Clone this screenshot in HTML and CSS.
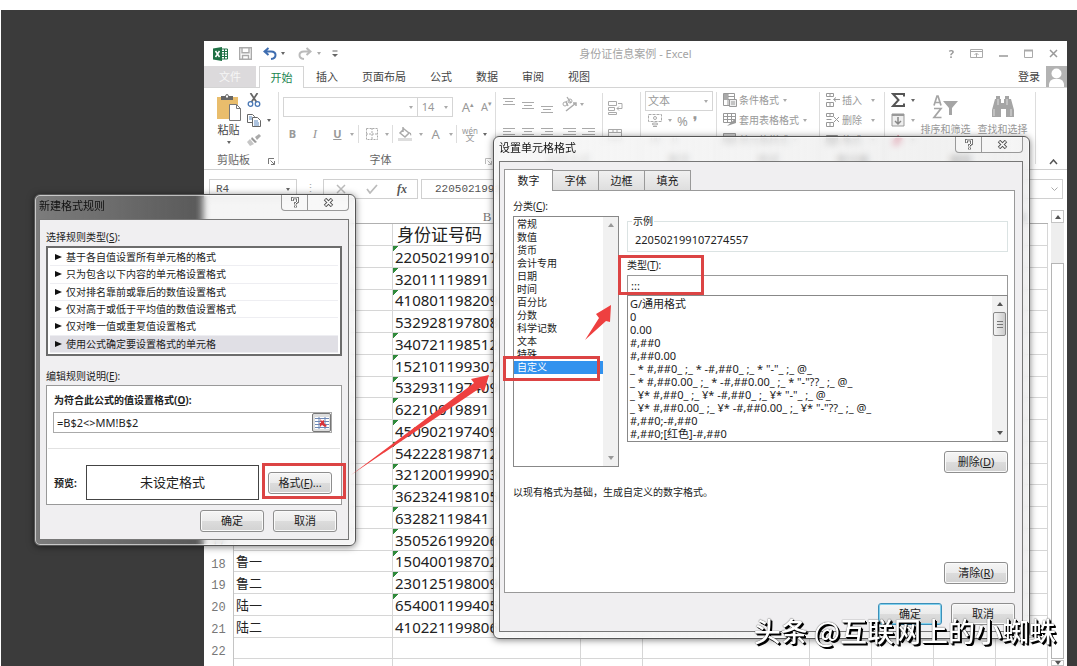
FILE: index.html
```html
<!DOCTYPE html>
<html lang="zh-CN">
<head>
<meta charset="utf-8">
<title>身份证信息案例 - Excel</title>
<link rel="stylesheet" href="styles.css">
</head>
<body>
<main class="desktop">

<section class="excel">
  <header class="titlebar">
    <div class="quick">
      <svg width="16" height="14" viewBox="0 0 16 14"><path d="M8 2h6.500v10H8z" fill="#fff" stroke="#1f7145"/><path d="M9 4.500h5M9 7h5M9 9.500h5M11.500 2v10" stroke="#1f7145"/><path d="M0 1.500 9 0v14L0 12.500z" fill="#1f7145"/><path d="m2.500 4 4 6M6.500 4l-4 6" stroke="#fff" stroke-width="1.500"/></svg>
      <svg class="save" width="13" height="13" viewBox="0 0 13 13"><path d="M.7.7h11.600v11.600H.7zM3 .7v5h7v-5M3.500 12V8.500h6V12" fill="none" stroke="#aaa" stroke-width="1.400"/></svg>
      <svg class="undo" width="14" height="13" viewBox="0 0 14 13"><path d="M5.500 1 1.500 4.500 5.500 8M2 4.500h6q4.500 0 4.500 3.500T8 12" fill="none" stroke="#3e6db0" stroke-width="2"/></svg>
      <i class="caret dark"></i>
      <svg class="redo" width="14" height="13" viewBox="0 0 14 13"><path d="m8.500 1 4 3.500-4 3.500M12 4.500H6Q1.500 4.500 1.500 8T6 12" fill="none" stroke="#bbb" stroke-width="2"/></svg>
      <i class="caret"></i>
      <svg class="more" width="6" height="8" viewBox="0 0 6 8"><path d="M.5 1h5" stroke="#666"/><path d="M0 4h6L3 7z" fill="#666"/></svg>
    </div>
    <h1>身份证信息案例 - Excel</h1>
    <div class="winctl">
      <button aria-label="帮助">?</button>
      <button aria-label="功能区显示选项"><svg width="13" height="10" viewBox="0 0 13 10"><path d="M.5.500h12v8H.5zM.5 2.500h12M6.500 8V4.500M4.500 6l2-2 2 2" fill="none" stroke="#aaa"/></svg></button>
      <button aria-label="最小化"><svg width="9" height="10"><path d="M0 7h9" stroke="#999" stroke-width="1.500"/></svg></button>
      <button aria-label="最大化"><svg width="9" height="10"><path d="M.5 1.500h8v7h-8z" fill="none" stroke="#aaa"/><path d="M0 1.500h9" stroke="#aaa" stroke-width="2"/></svg></button>
      <button aria-label="关闭"><svg width="9" height="10"><path d="m1 1 7 7M8 1 1 8" stroke="#999" stroke-width="1.500"/></svg></button>
    </div>
  </header>
  <nav class="tabs">
    <a href="#" class="file">文件</a>
    <a href="#" class="on">开始</a>
    <a href="#">插入</a><a href="#">页面布局</a><a href="#">公式</a><a href="#">数据</a><a href="#">审阅</a><a href="#">视图</a>
    <a href="#" class="login">登录</a>
    <svg class="avatar" width="21" height="21" viewBox="0 0 21 21"><path d="M0 0h21v21H0z" fill="#b3b3b3"/><circle cx="10.500" cy="7.500" r="5" fill="#fff"/><path d="M3 21v-3q1-4.500 5-5h5q4 .5 5 5v3z" fill="#fff"/></svg>
  </nav>

  <div class="ribbon">
    <section class="group g-clip">
      <div class="body">
        <button class="paste"><svg width="26" height="28" viewBox="0 0 26 28"><path d="M1 3h21v22H1z" fill="#e9bd6c"/><path d="M5 2h4q2-4 4 0h4v4H5z" fill="#666"/><path d="M10 1.500h2v2h-2z" fill="#fff"/><path d="M13.500 10.500h7l4 4v12h-11z" fill="#fff" stroke="#777"/><path d="M20.500 10.500v4h4" fill="none" stroke="#777"/></svg><span>粘贴</span><i class="caret dark"></i></button>
        <div class="stack">
          <button aria-label="剪切"><svg width="14" height="14" viewBox="0 0 14 14"><path d="m3.500 0 6 9M10.500 0l-6 9" stroke="#666" stroke-width="1.800"/><circle cx="3.500" cy="11" r="2.300" fill="none" stroke="#4a78b5" stroke-width="1.300"/><circle cx="10.500" cy="11" r="2.300" fill="none" stroke="#4a78b5" stroke-width="1.300"/></svg></button>
          <button aria-label="复制"><svg width="14" height="14" viewBox="0 0 14 14"><path d="M.5 1.500h5l2 2v6h-7z" fill="#fff" stroke="#666"/><path d="M5.500 4.500h5l3 3v6h-8z" fill="#fff" stroke="#666"/><path d="M2 4h3M2 6h3M7 8h4M7 10h5M7 12h5" stroke="#5b86bd"/></svg><i class="caret dark"></i></button>
          <button aria-label="格式刷"><svg width="14" height="14" viewBox="0 0 14 14"><path d="m8 4 4-3 2 2-4 4z" fill="#aaa"/><path d="m5 4 5 5-2 1-4-4z" fill="#999"/><path d="m3 6 4 5-4 2-3-4z" fill="#c6c6c6"/></svg></button>
        </div>
      </div>
      <footer>剪贴板<svg class="launch" width="7" height="7" viewBox="0 0 7 7"><path d="M.5 6V.500H6M2.500 2.500l4 4M6.500 3v3.500H3" fill="none" stroke="#777"/></svg></footer>
    </section>
    <section class="group g-font">
      <div class="body col">
        <div class="row">
          <button class="combo fontname" aria-label="字体"><i class="caret"></i></button><button class="combo size">14<i class="caret"></i></button>
          <button class="big">A<sup>▴</sup></button><button>A<sup>▾</sup></button>
        </div>
        <div class="row fmt">
          <button><b>B</b></button><button><em>I</em></button><button><u><b>U</b></u></button><i class="caret"></i><i class="bar"></i>
          <button aria-label="边框"><svg width="12" height="12"><path d="M.5.500h11v11H.5zM6 0v12M0 6h12" fill="none" stroke="#aaa" stroke-dasharray="2 1"/></svg></button><i class="caret"></i><i class="bar"></i>
          <button aria-label="填充颜色"><svg width="15" height="14" viewBox="0 0 15 14"><path d="m6 2 5 4-4 4-5-4zM5 0v5" fill="none" stroke="#aaa" stroke-width="1.500"/><path d="M11 5q3 1 2 4z" fill="#999"/><path d="M0 11h14v3H0z" fill="#ddd"/></svg></button><i class="caret"></i>
          <button class="big">A</button><i class="caret"></i><i class="bar"></i>
          <button class="wen"><small>wén</small>文</button><i class="caret dark"></i>
        </div>
      </div>
      <footer>字体<svg class="launch" width="7" height="7" viewBox="0 0 7 7"><path d="M.5 6V.500H6M2.500 2.500l4 4M6.500 3v3.500H3" fill="none" stroke="#bbb"/></svg></footer>
    </section>
    <section class="group g-align">
      <div class="body">
        <svg class="lines" width="130" height="56" viewBox="0 0 130 56" fill="none" stroke="#aaa">
          <path d="M7 5.500h12M9 8.500h8M7 11.500h12M26 9.500h12M28 12.500h8M26 15.500h12M45 13.500h12M47 16.500h8M45 19.500h12"/>
          <path d="M7 35.500h12M7 38.500h8M7 41.500h12M26 35.500h12M28 38.500h8M26 41.500h12M45 35.500h12M49 38.500h8M45 41.500h12M67 35.500h13M72 38.500h8M67 41.500h13M86 35.500h13M92 38.500h7M86 41.500h13"/>
          <path d="m70 18 10-8m-3 0h3v3" stroke-width="1.500"/><circle cx="69" cy="11" r="2"/><circle cx="74" cy="8" r="2"/><path d="m70 8 2 5M71 4l4 6" stroke-width="1.300"/>
          <path d="M84 10h4l-2 3z" fill="#aaa" stroke="none"/>
          <path d="M106.500 0v54" stroke="#ddd"/>
        </svg>
        <svg class="wrap" width="15" height="44" viewBox="0 0 15 44" fill="none" stroke="#aaa"><path d="M.5.500h8v4h-8zM.5 6.500h6v3h-6zM.5 11.500h8v2h-8zM10 2.500h4v5H9M11 5.500l-2 2 2 2M.5 28.500h13v11H.5zM.5 31.500h13M.5 36.500h13M5 28v3M9 28v3"/></svg>
      </div>
      <footer>对齐方式</footer>
    </section>
    <section class="group g-num">
      <div class="body col">
        <button class="combo text">文本<i class="caret"></i></button>
        <div class="row"><svg width="15" height="14" viewBox="0 0 15 14" fill="none" stroke="#aaa"><path d="M.5.500h13v7H.5z" stroke-dasharray="3 1"/><circle cx="7" cy="4" r="1.500"/><ellipse cx="7" cy="10" rx="3" ry="1"/><path d="M5 12.500h4"/></svg><i class="caret"></i><span class="pct">%</span><b>❜</b></div>
        <div class="row dec"><span>.00</span><span>.0</span></div>
      </div>
      <footer>数字</footer>
    </section>
    <section class="group g-style">
      <div class="body col">
        <button class="cmd"><svg width="14" height="14" viewBox="0 0 14 14"><path d="M.5.500h11v12H.5zM0 3.500h12M0 6.500h8M5 0v12" fill="none" stroke="#999"/><path d="M1 1h4v6H1z" fill="#aaa"/><path d="M6.500 6.500h7v7h-7z" fill="#eee" stroke="#999"/><path d="M8 9h4M8 11h4" stroke="#999"/></svg>条件格式<i class="caret"></i></button>
        <button class="cmd"><svg width="14" height="14" viewBox="0 0 14 14"><path d="M.5.500h12v9H.5zM0 3.500h12M4.500 0v10M8.500 0v10M0 6.500h12" fill="none" stroke="#999"/><path d="m4 13 9-8v5z" fill="#999"/></svg>套用表格格式<i class="caret"></i></button>
        <button class="cmd"><svg width="14" height="14" viewBox="0 0 14 14"><path d="M.5.500h12v10H.5zM0 4h12" fill="#ccc" stroke="#999"/></svg>单元格样式<i class="caret"></i></button>
      </div>
      <footer>样式</footer>
    </section>
    <section class="group g-cell">
      <div class="body col">
        <button class="cmd"><svg width="14" height="14" viewBox="0 0 14 14" fill="none" stroke="#999"><path d="M.5.500h7v3h-7zM.5 9.500h7v4h-7zM4 0v4M4 9v5M.5 6.500h4M8 6.500h6M10 4.500l-2.500 2 2.500 2"/></svg>插入<i class="caret"></i></button>
        <button class="cmd"><svg width="14" height="14" viewBox="0 0 14 14" fill="none" stroke="#999"><path d="M.5.500h7v3h-7zM.5 9.500h7v4h-7zM4 0v4M4 9v5M.5 6.500h5M8 4l5 5M13 4 8 9"/></svg>删除<i class="caret"></i></button>
        <button class="cmd"><svg width="14" height="14" viewBox="0 0 14 14"><path d="M.5 2.500h11v9H.5zM0 6h12" fill="#ccc" stroke="#999"/></svg>格式<i class="caret"></i></button>
      </div>
      <footer>单元格</footer>
    </section>
    <section class="group g-edit">
      <div class="body">
        <div class="stack">
          <button aria-label="自动求和"><svg width="14" height="14" viewBox="0 0 14 14"><path d="M13 3.500V1H2l5.500 6L2 13h11v-2.500" fill="none" stroke="#555" stroke-width="2"/></svg><i class="caret dark"></i></button>
          <button aria-label="填充"><svg width="14" height="14" viewBox="0 0 14 14"><path d="M1 1h12v12H1z" fill="#eee" stroke="#999"/><path d="M1 2h12" stroke="#999" stroke-width="2"/><path d="M7 4v7M4 8l3 3 3-3" fill="none" stroke="#888" stroke-width="1.500"/></svg><i class="caret"></i></button>
          <button aria-label="清除"><svg width="14" height="14" viewBox="0 0 14 14"><path d="m1 9 6-7 5 4-6 7H3z" fill="#e27a92"/></svg><i class="caret"></i></button>
        </div>
        <button class="tall"><svg width="28" height="24" viewBox="0 0 28 24"><path d="M2 10.500 5 1h1l3 9.500M3.500 7.500h4M2 13.500h7l-7 9h7.500" fill="none" stroke="#a5a5a5" stroke-width="1.700"/><path d="M11 6h15l-6 7v7h-3v-7z" fill="#a5a5a5"/></svg>排序和筛选</button>
        <button class="tall"><svg width="28" height="24" viewBox="0 0 28 24" fill="#a5a5a5"><path d="M7 1h4v3h1v4h3V4h1V1h4v3h2l3 11v7h-8v-8h-5v8H3v-7L6 4h1z"/><path d="M5 14v7M22 14v7M9 4v6M18 4v6" stroke="#ddd"/></svg>查找和选择</button>
      </div>
      <footer>编辑</footer>
    </section>
    <button class="collapse" aria-label="折叠功能区"><svg width="9" height="6"><path d="m1 5 3.500-4L8 5" fill="none" stroke="#555" stroke-width="1.500"/></svg></button>
  </div>

  <div class="formulabar">
    <button class="namebox">R4<i class="caret dark"></i></button>
    <span class="dots">⋮</span>
    <div class="fx">
      <svg width="10" height="10"><path d="m1 1 8 8M9 1 1 9" stroke="#bbb" stroke-width="1.500"/></svg>
      <svg width="12" height="10"><path d="m1 5 3 4 7-8" fill="none" stroke="#bbb" stroke-width="1.700"/></svg>
      <em>fx</em>
    </div>
    <label class="formula"><input type="text" value="220502199107274557" aria-label="编辑栏"><svg width="7" height="5"><path d="m.5.500 3 3 3-3" fill="none" stroke="#aaa"/></svg></label>
  </div>

  <div class="sheet">
    <table>
      <colgroup><col class="c-no"><col class="c-a"><col class="c-b"><col class="c-n"><col class="c-d"><col class="c-n"><col class="c-n"><col class="c-n"><col></colgroup>
      <thead><tr><th></th><th></th><th>B</th><th></th><th></th><th></th><th></th><th></th><th>H</th></tr></thead>
      <tbody>
      <tr><th></th><td></td><td class="kai">身份证号码</td><td></td><td></td><td></td><td></td><td></td><td></td></tr>
      <tr><th></th><td></td><td class="id">220502199107</td><td></td><td></td><td></td><td></td><td></td><td></td></tr>
      <tr><th></th><td></td><td class="id">32011119891</td><td></td><td></td><td></td><td></td><td></td><td></td></tr>
      <tr><th></th><td></td><td class="id">410801198209</td><td></td><td></td><td></td><td></td><td></td><td></td></tr>
      <tr><th></th><td></td><td class="plain">532928197808</td><td></td><td></td><td></td><td></td><td></td><td></td></tr>
      <tr><th></th><td></td><td class="id">340721198512</td><td></td><td></td><td></td><td></td><td></td><td></td></tr>
      <tr><th></th><td></td><td class="id">152101199307</td><td></td><td></td><td></td><td></td><td></td><td></td></tr>
      <tr><th></th><td></td><td class="id">532931197409</td><td></td><td></td><td></td><td></td><td></td><td></td></tr>
      <tr><th></th><td></td><td class="id">62210019891</td><td></td><td></td><td></td><td></td><td></td><td></td></tr>
      <tr><th></th><td></td><td class="id">450902197409</td><td></td><td></td><td></td><td></td><td></td><td></td></tr>
      <tr><th></th><td></td><td class="id">542228198712</td><td></td><td></td><td></td><td></td><td></td><td></td></tr>
      <tr><th></th><td></td><td class="id">321200199903</td><td></td><td></td><td></td><td></td><td></td><td></td></tr>
      <tr><th></th><td></td><td class="id">362324198105</td><td></td><td></td><td></td><td></td><td></td><td></td></tr>
      <tr><th></th><td></td><td class="id">63282119841</td><td></td><td></td><td></td><td></td><td></td><td></td></tr>
      <tr><th>17</th><td></td><td class="id">350526199206</td><td></td><td></td><td></td><td></td><td></td><td></td></tr>
      <tr><th>18</th><td>鲁一</td><td class="id">150400198702</td><td></td><td></td><td></td><td></td><td></td><td></td></tr>
      <tr><th>19</th><td>鲁二</td><td class="id">230125198009</td><td></td><td></td><td></td><td></td><td></td><td></td></tr>
      <tr><th>20</th><td>陆一</td><td class="id">654001199405</td><td></td><td></td><td></td><td></td><td></td><td></td></tr>
      <tr><th>21</th><td>陆二</td><td class="plain">410221199806</td><td></td><td></td><td></td><td></td><td></td><td></td></tr>
      <tr><th>22</th><td></td><td></td><td></td><td></td><td></td><td></td><td></td><td></td></tr>
      <tr><th></th><td></td><td></td><td></td><td></td><td></td><td></td><td></td><td></td></tr>
      </tbody>
    </table>
    <div class="vscroll">
      <button aria-label="向上滚动"><i class="up"></i></button>
      <div class="track"><div class="thumb"></div></div>
      <button aria-label="向下滚动"><i class="down"></i></button>
    </div>
  </div>
</section>

<section class="dialog rule" role="dialog" aria-labelledby="rule-title">
  <header><h2 id="rule-title">新建格式规则</h2><div class="ctl"><button aria-label="帮助"><svg width="8" height="11" viewBox="0 0 8 11"><path d="M1.500 4V1h5v4l-2 1v1.500M4.500 8.500v2" fill="none" stroke="#555" stroke-width="2.600"/><path d="M1.500 3.500V1h5v4l-2 1v1.500M4.500 8.800v1.400" fill="none" stroke="#fff"/></svg></button><button aria-label="关闭"><svg width="11" height="9" viewBox="0 0 11 9"><path d="m2 1 7 7M9 1 2 8" stroke="#555" stroke-width="3.500"/><path d="m2.500 1.500 6 6M8.500 1.500l-6 6" stroke="#fff" stroke-width="1.600"/></svg></button></div></header>
  <div class="client">
    <p class="cap" id="types">选择规则类型(<u>S</u>):</p>
    <ul class="rules" role="listbox" aria-labelledby="types">
      <li role="option">基于各自值设置所有单元格的格式</li>
      <li role="option">只为包含以下内容的单元格设置格式</li>
      <li role="option">仅对排名靠前或靠后的数值设置格式</li>
      <li role="option">仅对高于或低于平均值的数值设置格式</li>
      <li role="option">仅对唯一值或重复值设置格式</li>
      <li role="option" aria-selected="true" class="sel">使用公式确定要设置格式的单元格</li>
    </ul>
    <p class="cap second">编辑规则说明(<u>E</u>):</p>
    <div class="desc">
      <label for="cond">为符合此公式的值设置格式(<u>O</u>):</label>
      <div class="ref"><input id="cond" type="text" value="=B$2&lt;&gt;MM!B$2"><button aria-label="选择区域"><svg width="14" height="14" viewBox="0 0 14 14"><path d="M0 1h14v12H0z" fill="#fff"/><path d="M0 2.500h14M0 5.500h14M0 8.500h14M0 11.500h14M4 1v12M10 1v12" stroke="#6d87b5"/><path d="m5 3 2 2 2-1v3l3 3-2 1-3-2-2 2V8L4 7h2z" fill="#d8333a"/></svg></button></div>
      <div class="preview"><b>预览:</b><output>未设定格式</output><button class="btn">格式(<u>F</u>)...</button></div>
    </div>
    <div class="actions"><button class="btn">确定</button><button class="btn">取消</button></div>
  </div>
</section>

<section class="dialog cells" role="dialog" aria-labelledby="cells-title">
  <header><h2 id="cells-title">设置单元格格式</h2><div class="ctl"><button aria-label="帮助"><svg width="8" height="11" viewBox="0 0 8 11"><path d="M1.500 4V1h5v4l-2 1v1.500M4.500 8.500v2" fill="none" stroke="#555" stroke-width="2.600"/><path d="M1.500 3.500V1h5v4l-2 1v1.500M4.500 8.800v1.400" fill="none" stroke="#fff"/></svg></button><button aria-label="关闭"><svg width="11" height="9" viewBox="0 0 11 9"><path d="m2 1 7 7M9 1 2 8" stroke="#555" stroke-width="3.500"/><path d="m2.500 1.500 6 6M8.500 1.500l-6 6" stroke="#fff" stroke-width="1.600"/></svg></button></div></header>
  <div class="client">
    <div class="pagetabs" role="tablist"><button role="tab" class="on">数字</button><button role="tab">字体</button><button role="tab">边框</button><button role="tab">填充</button></div>
    <div class="page">
      <div class="split">
        <div class="left">
          <p class="cap" id="cats">分类(<u>C</u>):</p>
          <div class="listbox">
            <ul role="listbox" aria-labelledby="cats">
              <li role="option">常规</li><li role="option">数值</li><li role="option">货币</li><li role="option">会计专用</li><li role="option">日期</li><li role="option">时间</li><li role="option">百分比</li><li role="option">分数</li><li role="option">科学记数</li><li role="option">文本</li><li role="option">特殊</li><li role="option" aria-selected="true" class="sel">自定义</li>
            </ul>
            <div class="bar faint"><i class="up"></i><i class="down"></i></div>
          </div>
        </div>
        <div class="right">
          <fieldset><legend>示例</legend>220502199107274557</fieldset>
          <label for="type">类型(<u>T</u>):</label>
          <input id="type" type="text" value=":::">
          <div class="listbox formats">
            <ul role="listbox" aria-label="格式代码">
              <li role="option">G/通用格式</li><li role="option">0</li><li role="option">0.00</li><li role="option">#,##0</li><li role="option">#,##0.00</li>
              <li role="option">_ * #,##0_ ;_ * -#,##0_ ;_ * "-"_ ;_ @_ </li>
              <li role="option">_ * #,##0.00_ ;_ * -#,##0.00_ ;_ * "-"??_ ;_ @_ </li>
              <li role="option">_ ¥* #,##0_ ;_ ¥* -#,##0_ ;_ ¥* "-"_ ;_ @_ </li>
              <li role="option">_ ¥* #,##0.00_ ;_ ¥* -#,##0.00_ ;_ ¥* "-"??_ ;_ @_ </li>
              <li role="option">#,##0;-#,##0</li><li role="option">#,##0;[红色]-#,##0</li>
            </ul>
            <div class="bar"><i class="up"></i><span class="grip"></span><i class="down"></i></div>
          </div>
          <button class="btn">删除(<u>D</u>)</button>
        </div>
      </div>
      <p class="note">以现有格式为基础，生成自定义的数字格式。</p>
      <button class="btn clear">清除(<u>R</u>)</button>
    </div>
    <div class="actions"><button class="btn primary">确定</button><button class="btn">取消</button></div>
  </div>
</section>

<svg class="marks" width="1076" height="656" viewBox="1 10 1076 656">
  <g fill="none" stroke="#dc4444" stroke-width="3"><path d="M263.500 464.500h81v33h-81zM504.500 357.500h94v22h-94zM619.500 256.500h83v37h-83z"/></g>
  <g fill="#ee4040"><path d="m351 475 123-92-3-4 18-4-5 17-4-4zM585 340l14-22-3-4 15-9-1 17-4-1z"/></g>
</svg>
<p class="credit">头条 @互联网上的小蜘蛛</p>
</main>
</body>
</html>
```
FILE: styles.css
```css
* { box-sizing: border-box; }
body { margin: 0; background: #fff; font: 11px/14px "Noto Sans", "Noto Sans CJK SC", sans-serif; color: #222; }
h1, h2, p, ul { margin: 0; padding: 0; font-weight: 400; }
ul { list-style: none; }
button, input { font: inherit; color: inherit; margin: 0; padding: 0; border: 0; background: none; }
a { color: inherit; text-decoration: none; }
svg { flex: none; display: block; }

.desktop { position: relative; margin: 10px 0 0 1px; height: calc(100vh - 10px); overflow: hidden; background: #3b3b3b; }

.caret { flex: none; width: 0; height: 0; border: 2px solid transparent; border-top: 3px solid #aaa; border-bottom: 0; }
.caret.dark { border-top-color: #666; }
.up, .down { width: 0; height: 0; border: 3px solid transparent; }
.up { border-top: 0; border-bottom: 4px solid #555; }
.down { border-bottom: 0; border-top: 4px solid #555; }

/* Workbook window */
.excel { position: absolute; left: 203px; right: 10px; top: 31px; bottom: 0; background: #fff; display: flex; flex-direction: column; overflow: hidden; }
.titlebar { display: flex; height: 25px; align-items: center; position: relative; justify-content: space-between; }
.titlebar h1 { position: absolute; left: 0; right: 0; text-align: center; font-size: 11px; color: #a4a4a4; }
.quick { display: flex; align-items: center; padding-left: 9px; z-index: 1; }
.save { margin-left: 10px; }
.undo { margin: 0 4px 0 11px; }
.redo { margin: 0 5px 0 13px; }
.more { margin-left: 11px; }
.winctl { display: flex; align-items: center; gap: 16px; padding-right: 9px; z-index: 1; color: #999; font-weight: 700; }

.tabs { display: flex; height: 22px; align-items: stretch; border-bottom: 1px solid #d4d4d4; line-height: 21px; color: #444; }
.tabs a { margin-right: 24px; }
.tabs .file { width: 52px; margin-right: 3px; background: #dcdadc; color: #f6f6f6; text-align: center; }
.tabs .on { width: 45px; height: 22px; margin-right: 12px; border: 1px solid #d4d4d4; border-bottom: 0; background: #fff; color: #21854f; text-align: center; }
.tabs .login { margin: 0 6px 0 auto; }

.ribbon { display: flex; height: 82px; border-bottom: 1px solid #cfcfcf; color: #999; position: relative; }
.group { display: flex; flex-direction: column; justify-content: space-between; flex: none; position: relative; }
.group::after { content: ""; position: absolute; right: 0; top: 4px; bottom: 5px; border-right: 1px solid #ddd; }
.group .body { display: flex; }
.group .col { flex-direction: column; }
.group footer { height: 19px; line-height: 20px; text-align: center; color: #666; position: relative; }
.launch { position: absolute; right: 4px; top: 8px; }
.row { display: flex; align-items: center; }
.stack { display: flex; flex-direction: column; padding-top: 2px; }
.stack button { height: 20px; display: flex; align-items: center; gap: 6px; }

.g-clip { width: 75px; }
.g-clip footer { padding-right: 16px; }
.paste { display: flex; flex-direction: column; align-items: center; padding: 6px 0 0 9px; color: #444; width: 40px; }
.paste span { line-height: 16px; margin: 0 0 3px; }
.g-clip .stack { padding-left: 3px; }
.g-font { width: 217px; }
.g-font .body { padding: 9px 0 0 4px; gap: 7px; }
.combo { display: flex; align-items: center; justify-content: space-between; height: 20px; border: 1px solid #d5d5d5; padding: 0 4px; }
.fontname { width: 136px; justify-content: flex-end; }
.size { width: 36px; border-left: 0; margin-right: 5px; }
.g-font .row button:not(.combo) { width: 19px; text-align: center; }
.g-font .big { font-size: 13px; }
.g-font sup { font-size: 7px; line-height: 0; }
.fmt { height: 20px; justify-content: space-between; padding-right: 9px; }
.fmt .bar { width: 1px; height: 18px; background: #ddd; }
.g-font .fmt button { width: auto; min-width: 12px; display: grid; place-items: center; }
.fmt em { font-family: "Liberation Serif", serif; font-size: 13px; }
.fmt .wen { font-size: 9px; line-height: 8px; }
.wen small { font-size: 8px; line-height: 7px; }
.g-font footer { padding-right: 14px; }
.g-align { width: 145px; }
.g-align .body { padding-top: 5px; }
.wrap { margin: 8px 0 0 -18px; }
.g-num { width: 76px; }
.g-num .body { padding-top: 3px; }
.text { width: 68px; margin-left: 4px; padding: 0 4px 0 2px; }
.g-num .row { height: 19px; padding-left: 7px; gap: 5px; font-size: 13px; }
.g-num .dec { font-size: 9px; gap: 9px; }
.g-style { width: 103px; }
.g-style .body, .g-cell .body { padding: 2px 0 0 6px; }
.cmd { display: flex; align-items: center; gap: 2px; height: 20px; white-space: nowrap; font-size: 10px; }
.cmd .caret { margin-left: 2px; }
.g-cell { width: 65px; }
.g-cell .cmd .caret { margin-left: 7px; }
.g-edit { width: 151px; }
.g-edit .stack { padding-left: 6px; width: 32px; }
.tall { display: flex; flex-direction: column; align-items: center; gap: 3px; width: 57px; padding-top: 7px; font-size: 10px; }
.collapse { margin: auto 9px 4px auto; }

.formulabar { display: flex; padding: 9px 4px 8px 5px; align-items: stretch; height: 37px; font-family: "Liberation Mono", monospace; color: #555; }
.namebox { display: flex; align-items: center; justify-content: space-between; width: 88px; border: 1px solid #d0d0d0; padding: 0 6px; }
.dots { width: 26px; text-align: center; line-height: 20px; color: #aaa; }
.fx { display: flex; align-items: center; justify-content: space-between; width: 95px; padding: 0 10px 0 12px; border: 1px solid #d0d0d0; margin-right: 3px; }
.fx em { font: italic 700 12px "Liberation Serif", serif; }
.formula { flex: 1; display: flex; align-items: center; border: 1px solid #d0d0d0; padding: 0 4px 0 13px; }
.formula input { flex: 1; min-width: 0; }

.sheet { display: flex; flex: 1; min-height: 0; overflow: hidden; }
.sheet table { flex: 1; width: 0; border-collapse: separate; border-spacing: 0; table-layout: fixed; align-self: flex-start; }
.c-no { width: 30px; } .c-a { width: 159px; } .c-b { width: 188px; } .c-n { width: 62px; } .c-d { width: 167px; }
.sheet th { font: 12px/14px "Liberation Mono", monospace; color: #777; padding: 0; border-right: 1px solid #c4c4c4; }
.sheet thead th { font: 13px/13px "Liberation Serif", serif; height: 17px; border-right: 0; border-bottom: 1px solid #b0b0b0; vertical-align: bottom; }
.sheet tbody tr { height: 22px; }
.sheet tbody tr:nth-child(4n) { height: 21px; }
.sheet tbody th { padding: 6px 0 0; }
.sheet td { padding: 0 2px; border-right: 1px solid #d6d6d6; border-bottom: 1px solid #d6d6d6; font-size: 13px; line-height: 18px; overflow: hidden; white-space: nowrap; color: #222; }
.sheet .kai { font-size: 17px; padding-left: 4px; }
.sheet .id, .sheet .plain { font-size: 15px; line-height: 16px; }
.sheet .id { background: linear-gradient(135deg, #2f8a3b 4px, transparent 4px) no-repeat; }
.vscroll { width: 19px; display: flex; flex-direction: column; padding: 3px 3px 0; }
.vscroll button { display: grid; place-items: center; flex: none; height: 13px; border: 1px solid #c4c4c4; }
.vscroll .track { flex: 1; background: #eee; padding-top: 40px; margin-bottom: 1px; display: flex; }
.vscroll .thumb { flex: 1; border: 1px solid #b5b5b5; background: #fff; }
.vscroll button:last-child { height: 6px; overflow: hidden; }

/* Glass dialogs */
.dialog { position: absolute; display: flex; flex-direction: column; border: 1px solid #555; border-radius: 6px; padding: 0 6px 6px 5px; backdrop-filter: blur(3px); box-shadow: inset 0 0 0 1px rgba(255,255,255,.6), 0 1px 7px rgba(0,0,0,.5); color: #222; font-size: 10px; }
.rule { left: 33px; top: 184px; width: 322px; padding: 0 6px 5px 4px; background: linear-gradient(90deg, rgba(190,190,190,.5), rgba(220,220,220,.2) 50%, rgba(235,235,235,.5) 55%); }
.cells { left: 492px; top: 126px; width: 537px; background: linear-gradient(90deg, rgba(245,245,245,.8), rgba(225,225,225,.5)); }
.dialog header { display: flex; justify-content: space-between; height: 24px; }
.dialog h2 { font-size: 11px; line-height: 22px; color: #111; }
.ctl { display: flex; height: 16px; border: 1px solid #999; border-top: 0; border-radius: 0 0 4px 4px; background: rgba(255,255,255,.3); }
.ctl button { display: grid; place-items: center; width: 25px; }
.ctl button + button { width: 41px; border-left: 1px solid #999; }
.client { background: #f0eff1; border: 1px solid #777; display: flex; flex-direction: column; }
.btn { width: 64px; height: 22px; border: 1px solid #8e8e8e; border-radius: 3px; background: linear-gradient(#f5f5f5, #ebebeb 50%, #dcdcdc 51%, #d2d2d2); box-shadow: inset 0 0 0 1px #fafafa; font-size: 11px; line-height: 18px; text-align: center; }
.primary { border-color: #3c8fb8; box-shadow: inset 0 0 0 1px #7fd0ee; }
.cap { line-height: 14px; }

.rule .client { padding: 10px 6px 7px; }
.rules { margin-top: 2px; height: 110px; border: 2px solid #6c6c6c; background: #fff; padding: 1px 2px; display: flex; flex-direction: column; }
.rules li { flex: 1; display: flex; align-items: center; gap: 4px; padding-left: 5px; border-bottom: 1px solid #eeeef2; }
.rules li::before { content: ""; border: 3px solid transparent; border-left: 7px solid #111; border-right: 0; }
.rules .sel { background: #e0dfe5; }
.second { margin: 13px 0 2px; }
.desc { background: #fff; border: 1px solid #999; padding: 7px 9px 4px 6px; display: flex; flex-direction: column; }
.desc label { font-weight: 700; line-height: 15px; padding-left: 1px; }
.ref { display: flex; height: 21px; margin: 4px 0 15px; border: 1px solid #aaa; font-size: 11px; }
.ref input { flex: 1; min-width: 0; padding-left: 3px; }
.ref button { width: 19px; display: grid; place-items: center; border: 1px solid #777; border-radius: 2px; background: #ddd; }
.preview { display: flex; align-items: center; border-top: 1px solid #e2e2e2; margin: 0 -8px 0 -5px; padding: 16px 8px 0 6px; }
.preview b { width: 32px; }
.preview output { flex: 1; height: 35px; border: 1px solid #444; font-size: 13px; line-height: 32px; text-align: center; }
.preview .btn { margin-left: 9px; }
.actions { display: flex; justify-content: flex-end; gap: 9px; }
.rule .actions { padding: 5px 5px 0 0; }

.cells .client { padding: 7px 7px 6px 4px; }
.pagetabs { display: flex; align-items: flex-end; padding-left: 0; }
.pagetabs button { width: 46px; height: 20px; border: 1px solid #999; border-left: 0; border-bottom: 0; background: linear-gradient(#f0f0f0, #dedede); font-size: 11px; line-height: 18px; text-align: center; }
.pagetabs .on { position: relative; width: 49px; height: 22px; margin-bottom: -1px; border-left: 1px solid #999; background: #fff; }
.page { background: #fff; border: 1px solid #999; padding: 8px 6px 8px 8px; display: flex; flex-direction: column; }
.split { display: flex; gap: 8px; }
.left { width: 106px; display: flex; flex-direction: column; }
.left .cap { margin-bottom: 3px; }
.listbox { display: flex; border: 1px solid #888; background: #fff; }
.left .listbox { height: 251px; }
.listbox ul { flex: 1; min-width: 0; padding-top: 1px; }
.listbox li { height: 13px; line-height: 13px; padding-left: 3px; white-space: pre; }
.listbox .sel { background: #3292ee; color: #fff; }
.listbox .bar { width: 15px; background: #f1f1f1; display: flex; flex-direction: column; align-items: center; padding: 6px 0; }
.listbox .down { margin-top: auto; }
.faint .up { border-bottom-color: #999; }
.faint .down { border-top-color: #999; }
.grip { width: 13px; height: 24px; margin-top: 6px; border: 1px solid #888; border-radius: 2px; background: repeating-linear-gradient(#777 0 1px, transparent 1px 3px) center / 6px 7px no-repeat, linear-gradient(90deg, #f5f5f5, #ccc); }
.right { flex: 1; display: flex; flex-direction: column; padding-top: 15px; }
.right fieldset { margin: 0; padding: 4px 7px 3px; border: 1px solid #dbe3e3; min-width: 0; font-size: 11px; line-height: 16px; }
.right legend { font-size: 10px; line-height: 14px; padding: 0 1px; margin-left: -3px; }
.right label { margin-top: 6px; line-height: 14px; }
.right input { margin-top: 3px; height: 20px; padding-left: 3px; border: 1px solid #999; border-bottom: 0; font-size: 11px; }
.formats { height: 147px; font-size: 11px; }
.formats li { padding-left: 2px; }
.right .btn { margin: 9px 0 0 auto; }
.note { line-height: 14px; margin-top: 12px; }
.clear { margin: 63px 0 0 auto; }
.cells .actions { padding-top: 10px; }

.marks { position: absolute; left: 0; top: 0; pointer-events: none; }
.credit { position: absolute; right: 21px; bottom: 18px; font: 500 27px/34px "Noto Sans CJK SC", sans-serif; color: #fff; text-shadow: 1px 1px 0 #000, 2px 2px 0 #000, 0 0 1px #000; white-space: nowrap; }
```
